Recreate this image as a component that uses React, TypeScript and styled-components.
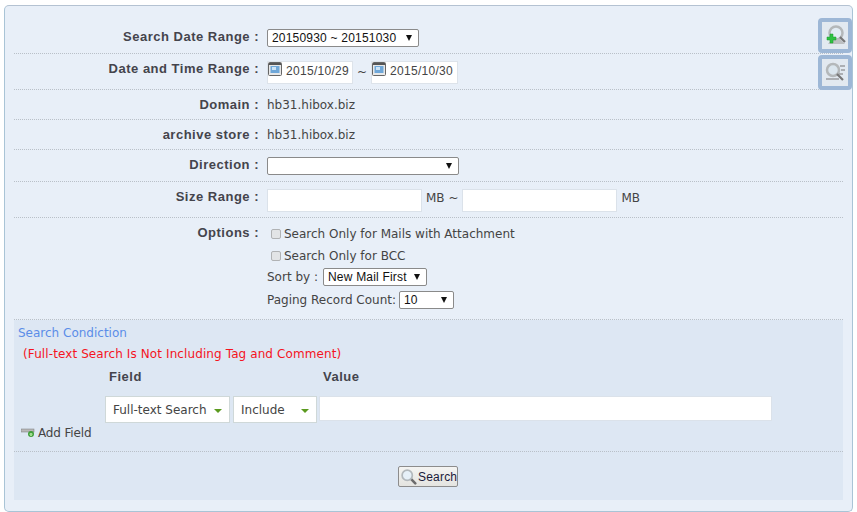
import React from "react";
import styled, { createGlobalStyle } from "styled-components";

const Global = createGlobalStyle`
  html, body { margin: 0; padding: 0; background: #fff; }
  body { font-family: "DejaVu Sans", Verdana, sans-serif; font-size: 12px; color: #444; }
`;
const Panel = styled.div`
  position: relative; box-sizing: border-box; width: 849px; height: 507px; margin: 5px 0 0 4px;
  background: #e8eff8; border: 1px solid #a9c4d6; border-top-color: #b4c2d2; border-radius: 5px;
  padding: 20px 9px 10px 9px;
`;
const Row = styled.div<{ $h: number }>`
  display: grid; grid-template-columns: 245px 1fr; column-gap: 8px; box-sizing: border-box;
  height: ${(p) => p.$h}px; border-bottom: 1px dotted #b9c0c8;
`;
const Label = styled.div<{ $top: number }>`
  text-align: right; font-family: "Liberation Sans", Arial, sans-serif; font-weight: bold; font-size: 13px; letter-spacing: 0.5px; color: #44444c;
  padding-top: ${(p) => p.$top}px; line-height: 16px; white-space: nowrap;
`;
const Value = styled.div<{ $top: number }>`
  display: flex; align-items: flex-start; padding-top: ${(p) => p.$top}px; line-height: 16px;
  color: #444; white-space: nowrap;
`;
const NativeSelect = styled.div<{ $w: number }>`
  box-sizing: border-box; width: ${(p) => p.$w}px; height: 18px; background: #fff; border: 1px solid #8a8a8a;
  border-radius: 2px; display: flex; align-items: center; justify-content: space-between;
  padding: 0 6px 0 4px; font-family: "Liberation Sans", Arial, sans-serif; font-size: 12px; letter-spacing: 0.2px; color: #111; line-height: 16px; flex: none;
`;
const Arrow = styled.span`
  width: 0; height: 0; border-left: 3.5px solid transparent; border-right: 3.5px solid transparent;
  border-top: 6px solid #111;
`;
const DateBox = styled.div<{ $w: number }>`
  box-sizing: border-box; width: ${(p) => p.$w}px; height: 23px; background: #fff; border: 1px solid #dde3ea;
  display: flex; align-items: flex-start; line-height: 18px; padding: 0; font-family: "Liberation Sans", Arial, sans-serif; font-size: 12px; letter-spacing: 0.3px;
  gap: 4px; color: #444;
`;
const Tilde = styled.span`
  width: 18px; text-align: center; line-height: 22px; font-size: 12px;
`;
const TextBox = styled.div<{ $w: number; $h: number; $nudge?: number }>`
  box-sizing: border-box; width: ${(p) => p.$w}px; height: ${(p) => p.$h}px; background: #fff; border: 1px solid #dbe2ea; flex: none;
  margin-left: ${(p) => p.$nudge ?? 0}px;
`;
const Unit = styled.span`
  padding: 0 4px; line-height: 18px; font-size: 12px;
`;
const OptionStack = styled.div`
  display: flex; flex-direction: column;
`;
const CheckLine = styled.label`
  display: flex; align-items: center; height: 22px; padding-left: 4px; font-size: 12px;
`;
const Check = styled.span`
  box-sizing: border-box; width: 10px; height: 10px; margin-right: 3px; background: #e2e4e6; border: 1px solid #b0b2b4; border-radius: 2px;
`;
const FormLine = styled.div<{ $gap: number }>`
  display: flex; align-items: center; height: 22px; margin-top: -1px; gap: ${(p) => p.$gap}px; font-size: 12px;
  & + & { margin-top: 1px; }
`;
const Search = styled.div`
  background: #dde7f3; height: 180px; box-sizing: border-box; display: flex; flex-direction: column; padding: 5px 0 0 4px;
`;
const SearchTitle = styled.div`
  color: #5b8de8; font-size: 12px; line-height: 17px;
`;
const Warn = styled.div`
  color: #f5141e; font-size: 12px; letter-spacing: 0.1px; line-height: 17px; margin: 4px 0 0 5px;
`;
const Heads = styled.div`
  display: flex; font-family: "Liberation Sans", Arial, sans-serif; font-weight: bold; font-size: 13px; letter-spacing: 0.5px; color: #44444c; line-height: 16px; margin-top: 6px; padding-left: 91px;
`;
const HeadCell = styled.div<{ $w: number }>`
  width: ${(p) => p.$w}px;
`;
const Fields = styled.div`
  display: flex; margin: 11px 0 0 87px; gap: 3px;
`;
const Drop = styled.div<{ $w: number }>`
  box-sizing: border-box; width: ${(p) => p.$w}px; height: 27px; background: #fff; border: 1px solid #cfd8d8;
  display: flex; align-items: center; justify-content: space-between; padding: 0 7px; font-size: 12px; color: #444;
`;
const GreenArrow = styled.span`
  width: 0; height: 0; border-left: 4px solid transparent; border-right: 4px solid transparent; border-top: 4px solid #5b9a1f; margin-top: 2px;
`;
const AddLine = styled.div`
  display: flex; align-items: center; gap: 2px; height: 16px; margin: 2px 0 0 3px; font-size: 12px; letter-spacing: -0.15px; color: #444;
`;
const Actions = styled.div`
  flex: none; margin: 10px 0 0 -4px; border-top: 1px dotted #b9c0c8; display: flex; justify-content: center; padding-top: 14px;
`;
const SearchButton = styled.div`
  box-sizing: border-box; width: 60px; height: 21px; margin-left: -1px; border: 1px solid #8c8c8c; border-radius: 2px;
  background: linear-gradient(#f4f4f2, #e4e4e0); display: flex; align-items: center; gap: 1px; padding-left: 1px;
  font-family: "Liberation Sans", Arial, sans-serif; font-size: 12px; letter-spacing: 0.2px; color: #1a1a3a;
`;
const Tools = styled.div`
  position: absolute; top: 12px; right: 0; display: flex; flex-direction: column; gap: 2px;
`;
const Tool = styled.div`
  box-sizing: border-box; width: 34px; height: 35px; background: #e2e9f0; border: 4px solid #9db7d6; border-radius: 4px;
  display: flex; align-items: center; justify-content: center;
`;

const Cal = () => (
  <svg width="14" height="14" viewBox="0 0 14 14" style={{ flex: "none" }}>
    <rect x="0.5" y="0.5" width="13" height="13" rx="1" fill="#e8e8e8" stroke="#666" />
    <rect x="1" y="1" width="12" height="2" fill="#555" />
    <rect x="2.5" y="4" width="9" height="7" fill="#6fa7d8" />
    <rect x="4" y="5" width="4" height="3" fill="#cde3f5" />
  </svg>
);
const Lens = () => (
  <svg width="17" height="17" viewBox="0 0 20 20" style={{ flex: "none" }}>
    <line x1="12" y1="12" x2="18" y2="18" stroke="#6b6b6b" strokeWidth="3" strokeLinecap="round" />
    <circle cx="8.5" cy="8.5" r="6" fill="#e6f0f8" stroke="#b2b8bc" strokeWidth="2" />
  </svg>
);
const ToolAdd = () => (
  <svg width="24" height="24" viewBox="0 0 24 24">
    <circle cx="13" cy="9" r="6.5" fill="#e2ecf4" stroke="#b4b8ba" strokeWidth="2.5" />
    <path d="M5 20 L9 15 L17 15 L22 20 Z" fill="#bcbfc1" />
    <line x1="17" y1="13" x2="22" y2="18" stroke="#777" strokeWidth="2.2" />
    <path d="M7 10h3v3h3v3h-3v3H7v-3H4v-3h3z" fill="#2fc243" stroke="#1b9a2f" strokeWidth="0.5" />
  </svg>
);
const ToolList = () => (
  <svg width="24" height="24" viewBox="0 0 24 24">
    <circle cx="10" cy="9" r="6" fill="#dbe6ee" stroke="#b4b8ba" strokeWidth="2.5" />
    <path d="M17 5h5M18 9h4M16 13h4M3 18h13" stroke="#9a9c9e" strokeWidth="1.4" />
    <line x1="14" y1="13" x2="20" y2="19" stroke="#777" strokeWidth="2.2" />
  </svg>
);
const AddIcon = () => (
  <svg width="15" height="10" viewBox="0 0 15 10" style={{ flex: "none" }}>
    <rect x="0" y="1" width="13" height="3" fill="#b8b8b8" stroke="#777" strokeWidth="0.5" />
    <circle cx="10" cy="6" r="3" fill="#3f9e3a" />
    <path d="M9 5h2v3H9zM8.5 5.6h3v1.4h-3z" fill="#9fdc8f" />
  </svg>
);

export default function App() {
  return (
    <>
      <Global />
      <Panel>
        <Row $h={28}>
          <Label $top={3}>Search Date Range :</Label>
          <Value $top={3}>
            <NativeSelect $w={152}>20150930 ~ 20151030<Arrow /></NativeSelect>
          </Value>
        </Row>
        <Row $h={36}>
          <Label $top={7}>Date and Time Range :</Label>
          <Value $top={7}>
            <DateBox $w={86}><Cal />2015/10/29</DateBox>
            <Tilde>~</Tilde>
            <DateBox $w={87}><Cal />2015/10/30</DateBox>
          </Value>
        </Row>
        <Row $h={30}>
          <Label $top={7}>Domain :</Label>
          <Value $top={7}>hb31.hibox.biz</Value>
        </Row>
        <Row $h={30}>
          <Label $top={7}>archive store :</Label>
          <Value $top={7}>hb31.hibox.biz</Value>
        </Row>
        <Row $h={32}>
          <Label $top={7}>Direction :</Label>
          <Value $top={7}><NativeSelect $w={192}><span /><Arrow /></NativeSelect></Value>
        </Row>
        <Row $h={36}>
          <Label $top={7}>Size Range :</Label>
          <Value $top={7}>
            <TextBox $w={155} $h={23} /><Unit>MB ~</Unit>
            <TextBox $w={155} $h={23} /><Unit>MB</Unit>
          </Value>
        </Row>
        <Row $h={102}>
          <Label $top={7}>Options :</Label>
          <Value $top={5}>
            <OptionStack>
              <CheckLine><Check />Search Only for Mails with Attachment</CheckLine>
              <CheckLine><Check />Search Only for BCC</CheckLine>
              <FormLine $gap={5}>Sort by :<NativeSelect $w={104}>New Mail First<Arrow /></NativeSelect></FormLine>
              <FormLine $gap={3}>Paging Record Count:<NativeSelect $w={55}>10<Arrow /></NativeSelect></FormLine>
            </OptionStack>
          </Value>
        </Row>
        <Search>
          <SearchTitle>Search Condiction</SearchTitle>
          <Warn>(Full-text Search Is Not Including Tag and Comment)</Warn>
          <Heads><HeadCell $w={214}>Field</HeadCell><HeadCell $w={100}>Value</HeadCell></Heads>
          <Fields>
            <Drop $w={125}>Full-text Search<GreenArrow /></Drop>
            <Drop $w={84}>Include<GreenArrow /></Drop>
            <TextBox $w={453} $h={25} $nudge={-1} />
          </Fields>
          <AddLine><AddIcon />Add Field</AddLine>
          <Actions>
            <SearchButton><Lens />Search</SearchButton>
          </Actions>
        </Search>
        <Tools>
          <Tool><ToolAdd /></Tool>
          <Tool><ToolList /></Tool>
        </Tools>
      </Panel>
    </>
  );
}
